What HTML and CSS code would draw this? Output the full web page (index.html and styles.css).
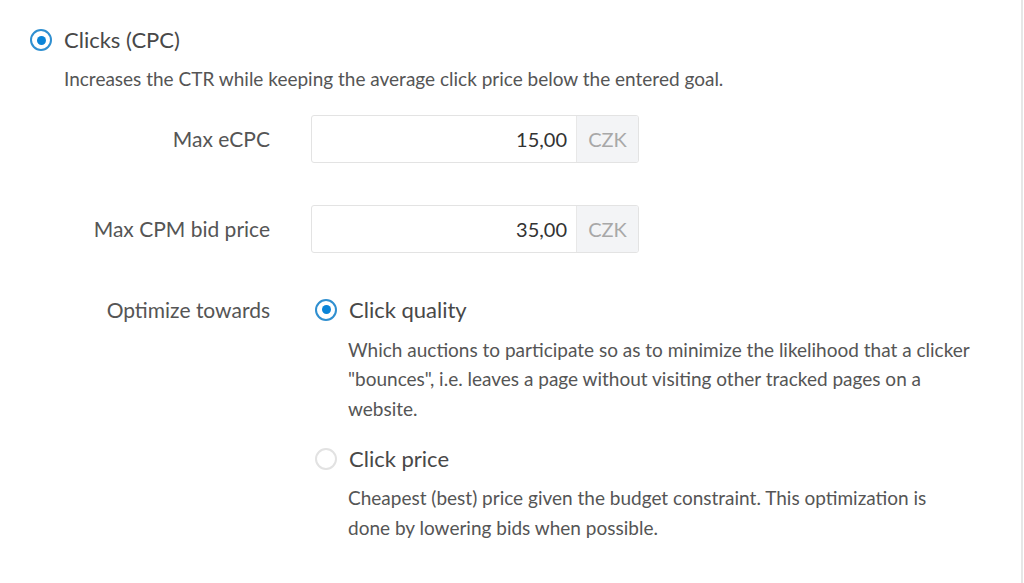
FILE: index.html
```html
<!DOCTYPE html>
<html lang="en">
<head>
<meta charset="utf-8">
<title>Clicks (CPC)</title>
<link rel="stylesheet" href="styles.css">
</head>
<body>
<div class="panel">
  <div class="radio-row top">
    <span class="radio checked"></span>
    <span class="radio-label">Clicks (CPC)</span>
  </div>
  <p class="desc main-desc">Increases the CTR while keeping the average click price below the entered goal.</p>

  <div class="form-row first">
    <div class="label">Max eCPC</div>
    <div class="input-group">
      <div class="input-value">15,00</div>
      <div class="addon">CZK</div>
    </div>
  </div>

  <div class="form-row">
    <div class="label">Max CPM bid price</div>
    <div class="input-group">
      <div class="input-value">35,00</div>
      <div class="addon">CZK</div>
    </div>
  </div>

  <div class="form-row options">
    <div class="label opt-label">Optimize towards</div>
    <div class="choices">
      <div class="radio-row">
        <span class="radio checked"></span>
        <span class="radio-label">Click quality</span>
      </div>
      <p class="desc sub-desc">Which auctions to participate so as to minimize the likelihood that a clicker "bounces", i.e. leaves a page without visiting other tracked pages on a website.</p>
      <div class="radio-row second">
        <span class="radio"></span>
        <span class="radio-label">Click price</span>
      </div>
      <p class="desc sub-desc narrow">Cheapest (best) price given the budget constraint. This optimization is done by lowering bids when possible.</p>
    </div>
  </div>
</div>
</body>
</html>
```

FILE: styles.css
```css
* { box-sizing: border-box; }
html, body { margin: 0; padding: 0; background: #fff; }
body {
  font-family: "Lato", "Liberation Sans", sans-serif;
  color: #555;
  width: 1024px;
  height: 583px;
  overflow: hidden;
}
.panel {
  width: 1023px;
  height: 583px;
  border-right: 2px solid #e6e6e6;
  padding: 29px 0 0 30px;
}
.radio-row {
  display: flex;
  align-items: center;
  gap: 12px;
  height: 22px;
}
.radio {
  width: 22px;
  height: 22px;
  border-radius: 50%;
  border: 2px solid #e2e2e2;
  background: #fff;
  flex: none;
  position: relative;
}
.radio.checked {
  border: 2.5px solid #2f8fd0;
}
.radio.checked::after {
  content: "";
  position: absolute;
  left: 50%;
  top: 50%;
  width: 9px;
  height: 9px;
  margin: -4.5px 0 0 -4.5px;
  border-radius: 50%;
  background: #0a84d8;
}
.radio-label {
  font-size: 22px;
  line-height: 22px;
  color: #484848;
}
.desc {
  margin: 0;
  font-size: 19px;
  line-height: 29.5px;
  color: #555;
}
.main-desc {
  margin: 13px 0 0 34px;
}
.form-row {
  display: grid;
  grid-template-columns: 240px 328px;
  column-gap: 41px;
  align-items: center;
  margin-top: 42px;
}
.form-row.first { margin-top: 21px; }
.label {
  text-align: right;
  font-size: 21px;
  color: #555;
}
.input-group {
  display: flex;
  height: 48px;
  border: 1px solid #e3e3e3;
  border-radius: 3px;
  overflow: hidden;
}
.input-value {
  flex: 1;
  display: flex;
  align-items: center;
  justify-content: flex-end;
  padding-right: 9px;
  font-size: 20px;
  color: #333;
}
.addon {
  width: 62px;
  display: flex;
  align-items: center;
  justify-content: center;
  background: #f3f4f6;
  border-left: 1px solid #e8e8e8;
  color: #a8a8a8;
  font-size: 20px;
}
.form-row.options {
  align-items: start;
  margin-top: 46px;
}
.opt-label { line-height: 22px; }
.choices { width: 690px; padding-left: 4px; }
.sub-desc {
  margin: 14px 0 0 33px;
  width: 632px;
}
.sub-desc.narrow { width: 615px; margin-top: 13px; }
.radio-row.second { margin-top: 25px; }
```
